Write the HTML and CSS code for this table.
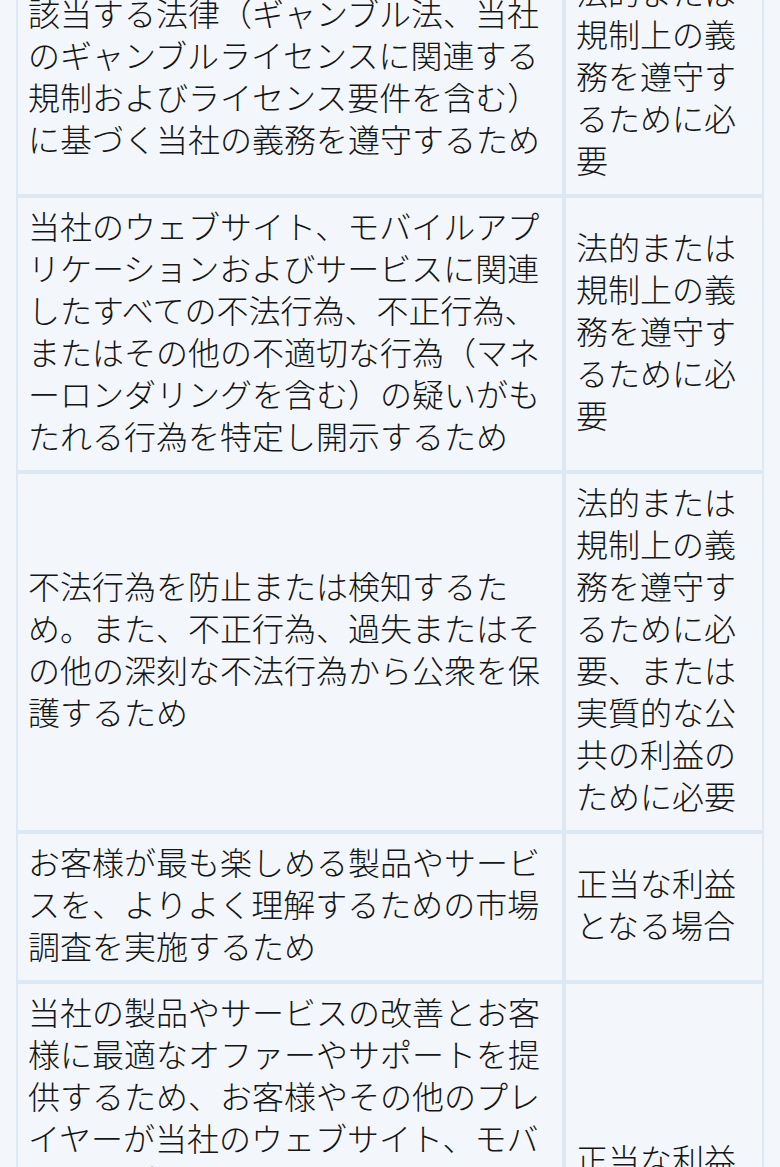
FILE: index.html
```html
<!DOCTYPE html>
<html lang="ja">
<head>
<meta charset="utf-8">
<link rel="stylesheet" href="styles.css">
</head>
<body>
<table class="basis">
<colgroup><col class="col-purpose"><col class="col-basis"></colgroup>
<tbody>
<tr>
<td>該当する法律（ギャンブル法、当社のギャンブルライセンスに関連する規制およびライセンス要件を含む）に基づく当社の義務を遵守するため</td>
<td>法的または規制上の義務を遵守するために必要</td>
</tr>
<tr>
<td>当社のウェブサイト、モバイルアプリケーションおよびサービスに関連したすべての不法行為、不正行為、またはその他の不適切な行為（マネーロンダリングを含む）の疑いがもたれる行為を特定し開示するため</td>
<td>法的または規制上の義務を遵守するために必要</td>
</tr>
<tr>
<td>不法行為を防止または検知するため。また、不正行為、過失またはその他の深刻な不法行為から公衆を保護するため</td>
<td>法的または規制上の義務を遵守するために必要、または実質的な公共の利益のために必要</td>
</tr>
<tr>
<td>お客様が最も楽しめる製品やサービスを、よりよく理解するための市場調査を実施するため</td>
<td>正当な利益となる場合</td>
</tr>
<tr>
<td>当社の製品やサービスの改善とお客様に最適なオファーやサポートを提供するため、お客様やその他のプレイヤーが当社のウェブサイト、モバイルアプリケーションおよびサービスをどのように利用しているかを分析し、お客様の行動や好みについての統計情報を作成するため、また調査を実施するため</td>
<td>正当な利益となる場合</td>
</tr>
</tbody>
</table>
</body>
</html>
```

FILE: styles.css
```css
html, body {
  background: #f3f7fb;
}
body {
  margin: 0 16px;
  font-family: "Noto Sans CJK JP", "Noto Sans", sans-serif;
  font-weight: 300;
  color: #151515;
}
.basis {
  width: 748px;
  margin-top: -38px;
  border-collapse: separate;
  border-spacing: 0;
  table-layout: fixed;
}
.col-purpose { width: 548px; }
.col-basis { width: 200px; }
.basis td {
  border: 2px solid #dce9f5;
  padding: 6px 10px 14px;
  font-size: 32px;
  line-height: 42px;
  vertical-align: middle;
  word-break: normal;
}
```
